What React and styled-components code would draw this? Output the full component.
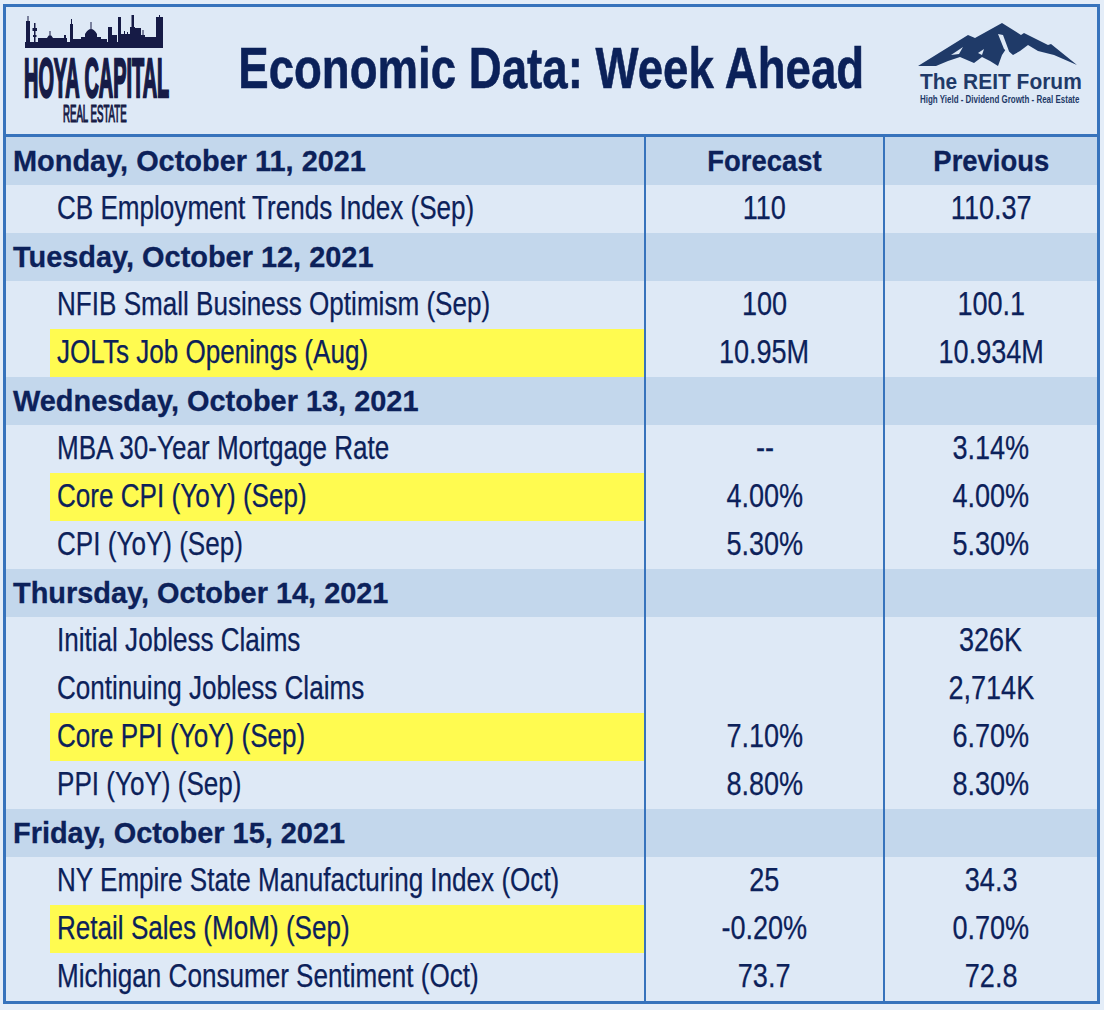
import styled, { createGlobalStyle } from "styled-components";

const FONT = `"Liberation Sans", Arial, sans-serif`;
const INK = "#0c215a";
const LINE = "#3773bc";
const PAPER = "#dee9f6";

const GlobalStyle = createGlobalStyle`
  html, body {
    margin: 0;
    background: #e4edf8;
  }
  body {
    font-family: ${FONT};
    color: ${INK};
  }
`;

const WEEK = [
  {
    day: "Monday, October 11, 2021",
    events: [["CB Employment Trends Index (Sep)", "110", "110.37"]],
  },
  {
    day: "Tuesday, October 12, 2021",
    events: [
      ["NFIB Small Business Optimism (Sep)", "100", "100.1"],
      ["JOLTs Job Openings (Aug)", "10.95M", "10.934M", true],
    ],
  },
  {
    day: "Wednesday, October 13, 2021",
    events: [
      ["MBA 30-Year Mortgage Rate", "--", "3.14%"],
      ["Core CPI (YoY) (Sep)", "4.00%", "4.00%", true],
      ["CPI (YoY) (Sep)", "5.30%", "5.30%"],
    ],
  },
  {
    day: "Thursday, October 14, 2021",
    events: [
      ["Initial Jobless Claims", "", "326K"],
      ["Continuing Jobless Claims", "", "2,714K"],
      ["Core PPI (YoY) (Sep)", "7.10%", "6.70%", true],
      ["PPI (YoY) (Sep)", "8.80%", "8.30%"],
    ],
  },
  {
    day: "Friday, October 15, 2021",
    events: [
      ["NY Empire State Manufacturing Index (Oct)", "25", "34.3"],
      ["Retail Sales (MoM) (Sep)", "-0.20%", "0.70%", true],
      ["Michigan Consumer Sentiment (Oct)", "73.7", "72.8"],
    ],
  },
];

const Frame = styled.div`
  box-sizing: border-box;
  width: 1097px;
  margin: 4px 0 0 3px;
  border: 3px solid ${LINE};
  background: ${PAPER};
`;

const Header = styled.header`
  display: grid;
  grid-template-columns: 200px 1fr 200px;
  align-items: start;
  height: 127px;
  border-bottom: 3px solid ${LINE};
`;

const Title = styled.h1`
  display: flex;
  justify-content: center;
  min-width: 0;
  margin: 33px 0 0;
  font-size: 57px;
  line-height: 1;
  font-weight: 700;
  color: #0b2159;
  -webkit-text-stroke: 0.6px #0b2159;
  white-space: nowrap;
`;

/* the source face is a narrow one; squeeze the metric-compatible face to its width */
const Squeeze = styled.span`
  display: inline-block;
  white-space: nowrap;
  transform: scaleX(${(p) => p.$x});
  transform-origin: ${(p) => p.$origin || "left center"};
`;

const HoyaMark = styled.svg`
  display: block;
  margin: 8px 0 0 17px;
`;

const ReitMark = styled.svg`
  display: block;
  justify-self: end;
  margin: 14px 13px 0 0;
`;

const Row = styled.div`
  display: grid;
  grid-template-columns: 638px 239px 214px;
  height: 48px;
  background: ${(p) => (p.$day ? "#c3d7ec" : PAPER)};
`;

const NameCell = styled.div`
  display: flex;
  align-items: stretch;
  padding-left: ${(p) => (p.$day ? "7px" : "44px")};
`;

const Name = styled.span`
  flex: 1;
  display: flex;
  align-items: center;
  box-sizing: border-box;
  padding: ${(p) => (p.$day ? "0" : "0 0 3px 7px")};
  background: ${(p) => (p.$marked ? "#fffb50" : "transparent")};
  font-size: ${(p) => (p.$day ? "29.5px" : "33px")};
  font-weight: ${(p) => (p.$day ? 700 : 400)};
  -webkit-text-stroke: ${(p) => (p.$day ? "0.3px" : "0.25px")} ${INK};
`;

const Value = styled.div`
  display: flex;
  align-items: center;
  justify-content: center;
  padding-bottom: ${(p) => (p.$bold ? "0" : "3px")};
  border-left: 2px solid ${LINE};
  font-size: ${(p) => (p.$bold ? "29.5px" : "33px")};
  font-weight: ${(p) => (p.$bold ? 700 : 400)};
  -webkit-text-stroke: ${(p) => (p.$bold ? "0.3px" : "0.25px")} ${INK};
`;

const HoyaLogo = () => (
  <HoyaMark width="150" height="114" viewBox="0 0 150 114">
    <path
      fill="#161b46"
      d="M2,27H140V33H2Z M3,6H7V27H3Z M4.5,1H5.5V6H4.5Z M11,8H12.5V27H11Z M9.5,13H14V16H9.5Z M10,20H13.5V22H10Z
      M15,23H44V27H15Z M24,23Q27,17 30,23Z M26.5,16H27.5V20H26.5Z M41,20H43V27H41Z M47,9H50V27H47Z M48,4H49V9H48Z
      M50,24H60V27H50Z M58,22H78V27H58Z M62,19H74V22H62Z M62,19Q68,9 74,19Z M67.5,7H68.5V14H67.5Z M78,24H84V27H78Z
      M85,12H89V27H85Z M89,20H94V27H89Z M95,2H98V27H95Z M98,19H108V27H98Z M101,16H102V19H101Z M104,17H105V19H104Z
      M108.5,0H111V27H108.5Z M107,12H112V27H107Z M112,13H118V27H112Z M118,20H122V27H118Z M119.5,15H120.5V20H119.5Z
      M122,22H133V27H122Z M133,2H140V27H133Z M136,0H137V2H136Z"
    />
    <text
      transform="translate(1 82) scale(0.362 1)"
      fontFamily={FONT}
      fontSize="55"
      fontWeight="700"
      fill="#161b46"
      stroke="#161b46"
      strokeWidth="2.4"
    >
      HOYA CAPITAL
    </text>
    <text
      transform="translate(40 107) scale(0.42 1)"
      fontFamily={FONT}
      fontSize="23"
      fontWeight="400"
      fill="#161b46"
      stroke="#161b46"
      strokeWidth="1.2"
    >
      REAL ESTATE
    </text>
  </HoyaMark>
);

const ReitLogo = () => (
  <ReitMark width="166" height="86" viewBox="0 0 166 86">
    <path
      fill="#1f3a68"
      d="M0,45L50,14L57,17L84,2L103,14L106,12L130,24L133,23L159,44L136,34L120,30L110,24L102,30L95,34L88,28L84,34L80,45L72,40L64,36L56,42L42,36L30,40L18,45Z"
    />
    <path
      fill={PAPER}
      d="M80,13L85,14L92,33L86,28Z M33,34L45,26L41,33Z M60,32L66,28L64,34Z M112,28L118,31L110,31Z"
    />
    <text
      transform="translate(2 68) scale(0.975 1)"
      fontFamily={FONT}
      fontSize="21.5"
      fontWeight="700"
      fill="#1f3a68"
    >
      The REIT Forum
    </text>
    <text
      transform="translate(2 82) scale(0.76 1)"
      fontFamily={FONT}
      fontSize="10.5"
      fontWeight="700"
      fill="#1f3a68"
    >
      High Yield - Dividend Growth - Real Estate
    </text>
  </ReitMark>
);

export default function App() {
  return (
    <>
      <GlobalStyle />
      <Frame>
        <Header>
          <HoyaLogo />
          <Title>
            <Squeeze $x={0.8} $origin="center">
              Economic Data: Week Ahead
            </Squeeze>
          </Title>
          <ReitLogo />
        </Header>
        {WEEK.map((d, i) => (
          <div key={d.day}>
            <Row $day>
              <NameCell $day>
                <Name $day>
                  <Squeeze $x={0.98}>{d.day}</Squeeze>
                </Name>
              </NameCell>
              <Value $bold>
                {i === 0 && (
                  <Squeeze $x={0.93} $origin="center">
                    Forecast
                  </Squeeze>
                )}
              </Value>
              <Value $bold>
                {i === 0 && (
                  <Squeeze $x={0.93} $origin="center">
                    Previous
                  </Squeeze>
                )}
              </Value>
            </Row>
            {d.events.map(([name, forecast, previous, marked]) => (
              <Row key={name}>
                <NameCell>
                  <Name $marked={marked}>
                    <Squeeze $x={0.79}>{name}</Squeeze>
                  </Name>
                </NameCell>
                <Value>
                  <Squeeze $x={0.82} $origin="center">
                    {forecast}
                  </Squeeze>
                </Value>
                <Value>
                  <Squeeze $x={0.82} $origin="center">
                    {previous}
                  </Squeeze>
                </Value>
              </Row>
            ))}
          </div>
        ))}
      </Frame>
    </>
  );
}
